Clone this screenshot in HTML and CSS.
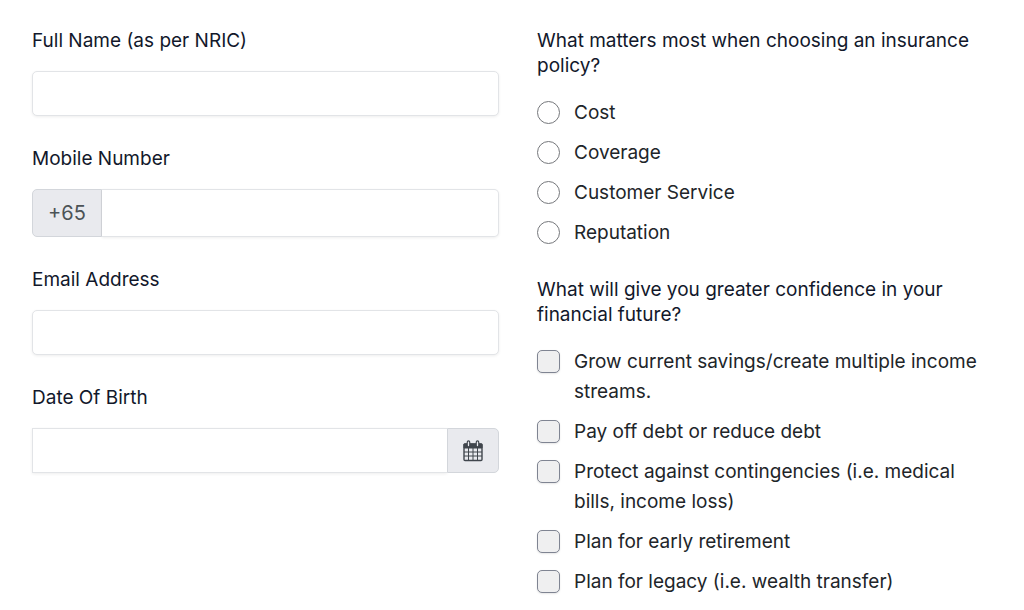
FILE: index.html
```html
<!DOCTYPE html>
<html lang="en">
<head>
  <meta charset="UTF-8" />
  <meta name="viewport" content="width=device-width, initial-scale=1" />
  <title>Insurance Enquiry</title>
  <link rel="stylesheet" href="styles.css">
</head>
<body>
  <form class="enquiry-form">
    <div class="column">
      <div class="field">
        <label for="fullName">Full Name (as per NRIC)</label>
        <input type="text" class="text-input" id="fullName" name="fullName">
      </div>
      <div class="field">
        <label for="mobile">Mobile Number</label>
        <div class="input-group">
          <span class="addon prefix">+65</span>
          <input type="tel" class="text-input" id="mobile" name="mobile">
        </div>
      </div>
      <div class="field">
        <label for="email">Email Address</label>
        <input type="email" class="text-input" id="email" name="email">
      </div>
      <div class="field">
        <label for="dob">Date Of Birth</label>
        <div class="input-group date">
          <input type="text" class="text-input" id="dob" name="dob">
          <button type="button" class="addon" aria-label="Choose date">
            <svg width="20" height="22" viewBox="0 0 20 22" fill="none" stroke="#40464d">
              <rect x="1" y="4" width="18" height="16.5" rx="1" stroke-width="1.4"/>
              <path d="M1 4h18v4H1z" fill="#40464d"/>
              <path d="M5.5 2v3.5M14.5 2v3.5" stroke-width="3.6" stroke-linecap="round"/>
              <path d="M5.5 2.2v3.3M14.5 2.2v3.3" stroke="#e9eaee" stroke-width="1.3" stroke-linecap="round"/>
              <path d="M5.5 8v12M10 8v12M14.5 8v12M1 12h18M1 16h18" stroke-width="1"/>
            </svg>
          </button>
        </div>
      </div>
    </div>

    <div class="column">
      <fieldset class="question">
        <legend>What matters most when choosing an insurance policy?</legend>
        <label class="option"><input type="radio" name="priority" value="cost"><span>Cost</span></label>
        <label class="option"><input type="radio" name="priority" value="coverage"><span>Coverage</span></label>
        <label class="option"><input type="radio" name="priority" value="service"><span>Customer Service</span></label>
        <label class="option"><input type="radio" name="priority" value="reputation"><span>Reputation</span></label>
      </fieldset>
      <fieldset class="question">
        <legend>What will give you greater confidence in your financial future?</legend>
        <label class="option"><input type="checkbox" name="goal" value="savings"><span>Grow current savings/create multiple income streams.</span></label>
        <label class="option"><input type="checkbox" name="goal" value="debt"><span>Pay off debt or reduce debt</span></label>
        <label class="option"><input type="checkbox" name="goal" value="protect"><span>Protect against contingencies (i.e. medical bills, income loss)</span></label>
        <label class="option"><input type="checkbox" name="goal" value="retirement"><span>Plan for early retirement</span></label>
        <label class="option"><input type="checkbox" name="goal" value="legacy"><span>Plan for legacy (i.e. wealth transfer)</span></label>
      </fieldset>
    </div>
  </form>
</body>
</html>
```

FILE: styles.css
```css
* {
  box-sizing: border-box;
}
body {
  margin: 0;
  font-family: Inter, sans-serif;
  font-size: 19px;
  line-height: 30px;
  color: #212529;
  background: #fff;
}
.enquiry-form {
  display: grid;
  grid-template-columns: 1fr 1fr;
  gap: 38px;
  padding: 28px 20px 0 32px;
}
.field {
  margin-bottom: 30px;
}
.field label,
.question legend {
  display: block;
  line-height: 25px;
  color: #12182b;
}
.field label {
  margin-bottom: 18px;
}
.text-input {
  display: block;
  width: 100%;
  height: 45px;
  padding: 7px 16px;
  font: inherit;
  color: inherit;
  background: #fff;
  border: 1px solid #e2e4e7;
  border-radius: 5px;
  box-shadow: 0 1px 3px rgba(0, 0, 0, 0.07);
}
.input-group {
  display: flex;
  height: 48px;
}
.input-group .text-input {
  flex: 1;
  min-width: 0;
  height: auto;
  border-left: 0;
  border-radius: 0 5px 5px 0;
}
.addon {
  display: flex;
  align-items: center;
  justify-content: center;
  padding: 0 15px;
  font: inherit;
  font-size: 20px;
  color: #4c5356;
  background: #e9eaee;
  border: 1px solid #d3d6db;
  border-radius: 0 5px 5px 0;
}
.prefix {
  border-radius: 5px 0 0 5px;
}
.date {
  height: 45px;
}
.date .text-input {
  border-left: 1px solid #e2e4e7;
  border-right: 0;
  border-radius: 0;
}
.question {
  min-width: 0;
  margin: 0 0 29px;
  padding: 0;
  border: 0;
}
.question:last-child {
  margin-bottom: 0;
}
.question legend {
  padding: 0;
  margin-bottom: 20px;
}
.option {
  display: flex;
  gap: 14px;
  margin-bottom: 10px;
  padding-right: 12px;
}
.option:last-child {
  margin-bottom: 0;
}
.option input {
  appearance: none;
  flex: none;
  width: 23px;
  height: 23px;
  margin: 3px 0 0;
  background: #fff;
  border: 1px solid #75777b;
  border-radius: 5px;
}
.option input[type="radio"] {
  border-radius: 50%;
}
.option input[type="checkbox"] {
  background: #efeff0;
  border-color: #7f8492;
  box-shadow: 0 1px 2px rgba(0, 0, 0, 0.1);
}
.option input:checked {
  background: #4c5356;
}
```
